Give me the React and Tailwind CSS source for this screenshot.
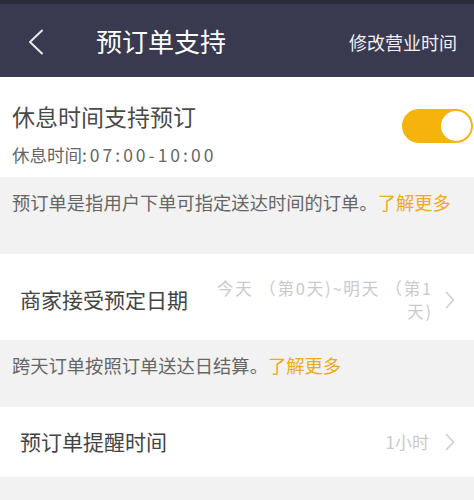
import React from 'react';

const font = { fontFamily: '"Noto Sans CJK SC", "Noto Sans", sans-serif' };

function Chevron() {
  return (
    <svg width="10" height="18" viewBox="0 0 10 18" fill="none" className="shrink-0">
      <path d="M1.5 1.5L8.5 9L1.5 16.5" stroke="#cfcfcf" strokeWidth="1.6" strokeLinecap="round" strokeLinejoin="round" />
    </svg>
  );
}

export default function App() {
  return (
    <div className="w-[474px] h-[500px] overflow-hidden bg-[#f2f2f2]" style={font}>
      {/* Header */}
      <div className="h-[77px] border-t-4 border-[#2b2b3a] bg-[#393a4f] flex items-center pl-[28px] pr-[17px]">
        <svg width="16" height="26" viewBox="0 0 16 26" fill="none" className="shrink-0 mt-[2px]">
          <path d="M14 1.5L2 13L14 24.5" stroke="#e8e8ee" strokeWidth="2" strokeLinecap="round" strokeLinejoin="round" />
        </svg>
        <div className="ml-[52px] text-white text-[26px] leading-none">预订单支持</div>
        <div className="ml-auto text-[#f0f0f4] text-[18px] leading-none mt-[2px]">修改营业时间</div>
      </div>

      {/* Rest time toggle */}
      <div className="h-[100px] bg-white flex justify-between pl-3">
        <div className="flex flex-col pt-[23px]">
          <div className="text-[23px] leading-[32px] text-[#4a4a4a]">休息时间支持预订</div>
          <div className="mt-[11px] text-[17.5px] leading-[24px] text-[#666]">
            休息时间<span className="tracking-[3px]">:07:00-10:00</span>
          </div>
        </div>
        <div className="mt-[32px] mr-[1px] w-[71px] h-[34px] rounded-full bg-[#f5b30c] flex items-center justify-end pr-[2px]">
          <div className="w-[30px] h-[30px] rounded-full bg-white"></div>
        </div>
      </div>

      {/* Note 1 */}
      <div className="h-[77px] pl-3 pt-[12px]">
        <div className="text-[18.3px] leading-[26px] text-[#666]">
          预订单是指用户下单可指定送达时间的订单。<span className="text-[#f0a81c]">了解更多</span>
        </div>
      </div>

      {/* Date row */}
      <div className="h-[86px] bg-white flex items-center pl-5 pr-[19px] pt-[6px]">
        <div className="text-[21px] text-[#444]">商家接受预定日期</div>
        <div className="ml-auto flex items-center gap-3">
          <div className="text-right text-[16.5px] leading-[23px] text-[#cacaca] tracking-[1.8px]">
            <div>今天 （第0天)~明天 （第1</div>
            <div>天)</div>
          </div>
          <Chevron />
        </div>
      </div>

      {/* Note 2 */}
      <div className="h-[67px] pl-3 pt-[12px]">
        <div className="text-[18.3px] leading-[26px] text-[#666]">
          跨天订单按照订单送达日结算。<span className="text-[#f0a81c]">了解更多</span>
        </div>
      </div>

      {/* Reminder row */}
      <div className="h-[70px] bg-white flex items-center pl-5 pr-[19px]">
        <div className="text-[21px] text-[#444]">预订单提醒时间</div>
        <div className="ml-auto flex items-center gap-4">
          <div className="text-[17px] text-[#cacaca]">1小时</div>
          <Chevron />
        </div>
      </div>
    </div>
  );
}
